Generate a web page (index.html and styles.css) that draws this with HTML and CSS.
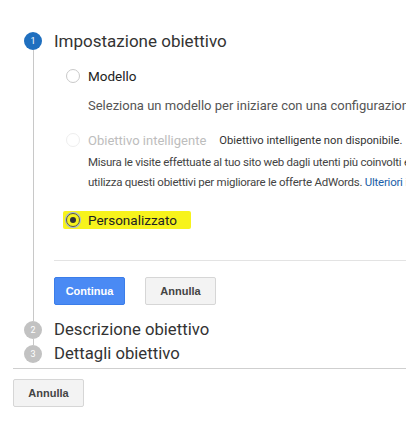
FILE: index.html
```html
<!DOCTYPE html>
<html lang="it">
<head>
    <meta charset="UTF-8">
    <title>Nuovo obiettivo</title>
    <link rel="stylesheet" href="styles.css">
</head>
<body>

    <div class="stepper">
        <!-- Passo 1 -->
        <section class="step">
            <div class="step-rail">
                <span class="step-num active">1</span>
                <span class="step-line"></span>
            </div>
            <div class="step-body first">
                <h2 class="step-title">Impostazione obiettivo</h2>

                <div class="options">
                    <label class="option">
                        <span class="radio"></span>
                        <span class="option-label">Modello</span>
                    </label>
                    <p class="option-desc tpl">Seleziona un modello per iniziare con una configurazione precompilata</p>

                    <label class="option disabled">
                        <span class="radio"></span>
                        <span class="option-label">Obiettivo intelligente</span>
                        <span class="option-note">Obiettivo intelligente non disponibile.</span>
                    </label>
                    <p class="option-desc small">Misura le visite effettuate al tuo sito web dagli utenti più coinvolti e<br>utilizza questi obiettivi per migliorare le offerte AdWords. <a href="#">Ulteriori informazioni</a></p>

                    <label class="option custom">
                        <span class="marker">
                            <span class="radio checked"></span>
                            <span class="option-label">Personalizzato</span>
                        </span>
                    </label>
                </div>

                <div class="actions">
                    <button class="btn btn-primary">Continua</button>
                    <button class="btn">Annulla</button>
                </div>
            </div>
        </section>

        <!-- Passo 2 -->
        <section class="step">
            <div class="step-rail">
                <span class="step-num">2</span>
                <span class="step-line short"></span>
            </div>
            <div class="step-body">
                <h2 class="step-title small">Descrizione obiettivo</h2>
            </div>
        </section>

        <!-- Passo 3 -->
        <section class="step">
            <div class="step-rail">
                <span class="step-num">3</span>
            </div>
            <div class="step-body">
                <h2 class="step-title small">Dettagli obiettivo</h2>
            </div>
        </section>
    </div>

    <footer class="footer">
        <button class="btn">Annulla</button>
    </footer>

</body>
</html>
```

FILE: styles.css
```css
/* Generale */
body {
    margin: 0;
    font-family: Roboto, 'Liberation Sans', sans-serif;
    color: #333;
    background: #fff;
    overflow: hidden;
}

.stepper {
    padding: 32px 0 0 24px;
}

/* Passi */
.step {
    display: grid;
    grid-template-columns: 18px 1fr;
    column-gap: 12px;
}

.step-rail {
    display: flex;
    flex-direction: column;
    align-items: center;
}

.step-num {
    width: 18px;
    height: 18px;
    border-radius: 50%;
    background: #c2c2c2;
    color: #fff;
    font-size: 9px;
    line-height: 18px;
    text-align: center;
    flex-shrink: 0;
}

.step-num.active {
    background: #1f6fbf;
}

.step-line {
    flex: 1;
    width: 1px;
    background: #c8c8c8;
}

.step-line.short {
    min-height: 6px;
}

.step-body {
    min-width: 0;
}

.step-body.first {
    padding-bottom: 16px;
}

.step-title {
    margin: 0;
    font-size: 17px;
    font-weight: 400;
    line-height: 18px;
    color: #333;
    white-space: nowrap;
}

.step-title.small {
    font-size: 16.7px;
}

/* Opzioni */
.options {
    padding-left: 12px;
    margin-top: 16px;
    border-bottom: 1px solid #e3e3e3;
    padding-bottom: 30px;
}

.option {
    display: flex;
    align-items: center;
    gap: 8px;
    height: 20px;
    font-size: 13.5px;
    color: #222;
    white-space: nowrap;
}

.radio {
    width: 12px;
    height: 12px;
    border: 1px solid #c9c9c9;
    border-radius: 50%;
    background: #fff;
    flex-shrink: 0;
    position: relative;
}

.radio.checked {
    border-color: #555;
    background: transparent;
    box-shadow: 0 0 0 1px #9fb4e0;
}

.radio.checked::after {
    content: '';
    position: absolute;
    top: 3px;
    left: 3px;
    width: 6px;
    height: 6px;
    border-radius: 50%;
    background: #333;
}

.option.disabled .radio {
    border-color: #eee;
}

.option.disabled .option-label {
    color: #bdbdbd;
    font-size: 13px;
}

.option-note {
    margin-left: 5px;
    font-size: 11.2px;
    color: #333;
}

.option-desc {
    margin: 0;
    padding-left: 22px;
    white-space: nowrap;
    color: #555;
}

.option-desc.tpl {
    margin-top: 10px;
    margin-bottom: 14px;
    font-size: 13px;
    line-height: 20px;
}

.option-desc.small {
    margin-top: 2px;
    font-size: 11.5px;
    letter-spacing: -0.25px;
    line-height: 20px;
    color: #444;
}

.option-desc a {
    color: #1a5ea8;
    text-decoration: none;
}

.option.custom {
    margin-top: 18px;
}

/* Evidenziatore giallo */
.marker {
    display: flex;
    align-items: center;
    gap: 8px;
    background: #f7f31c;
    margin-left: -3px;
    padding: 1px 14px 1px 3px;
    border-radius: 2px;
}

/* Bottoni */
.actions {
    display: flex;
    gap: 20px;
    margin-top: 16px;
}

.btn {
    width: 71px;
    height: 28px;
    border: 1px solid #d6d6d6;
    border-radius: 2px;
    background: #f3f3f3;
    color: #444;
    font-family: 'Liberation Sans', Arial, sans-serif;
    font-size: 11px;
    font-weight: 700;
    cursor: pointer;
}

.btn-primary {
    background: #4a8af4;
    border-color: #3b7de9;
    color: #fff;
}

/* Footer */
.footer {
    margin: 5px 0 0 13px;
    padding-top: 10px;
    border-top: 1px solid #cfcfcf;
}
```
